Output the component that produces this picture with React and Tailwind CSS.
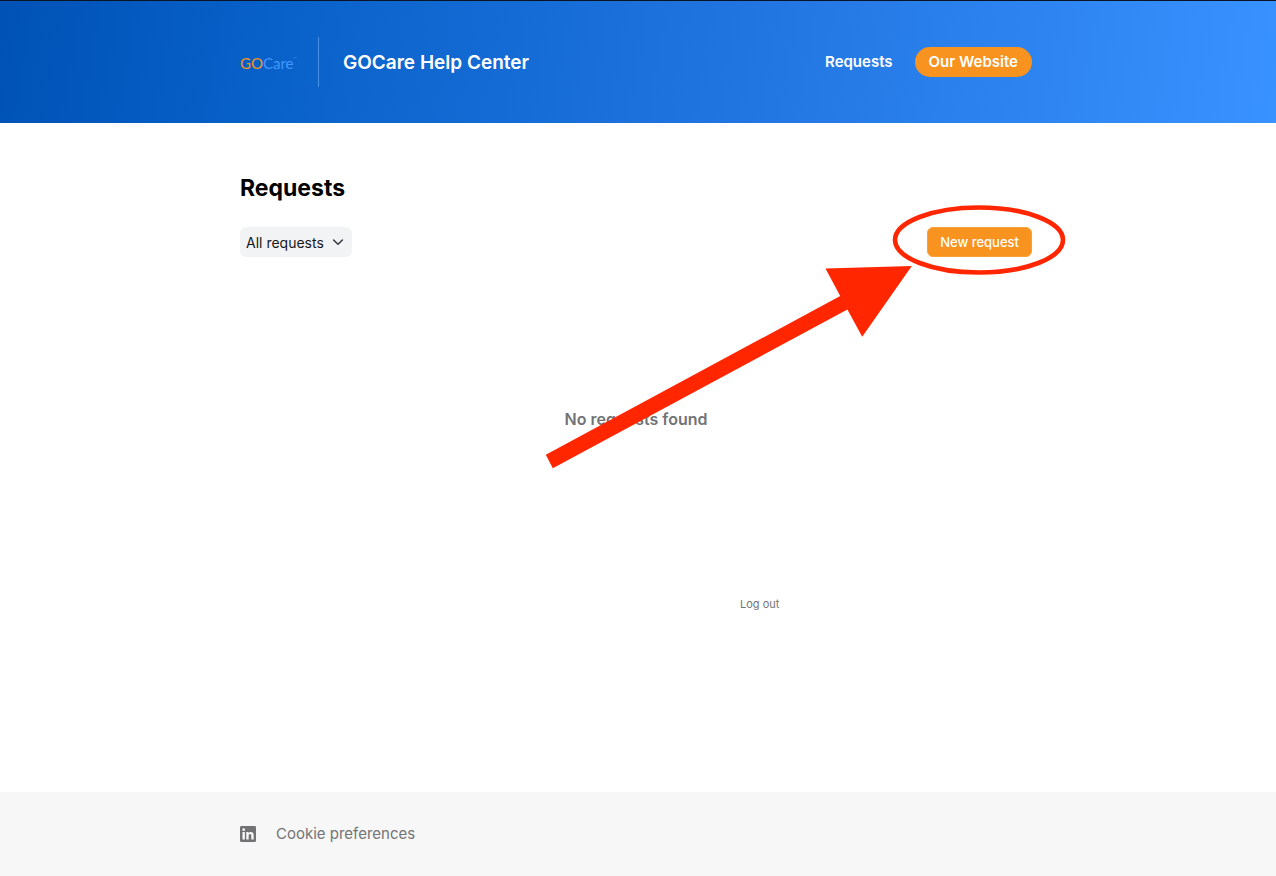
import React from "react";

const container = "mx-auto w-full max-w-[792px]";

function Logo() {
  return (
    <a href="#home" aria-label="GOCare" className="flex h-[50px] w-[79px] items-center border-r border-[#4a8fe6]">
      <span className="flex items-start pt-px font-['Lato','Liberation_Sans',sans-serif] text-[15px] leading-5">
        <span className="text-[#f7931e]">GO</span>
        <span className="text-[#4198ff]">Care</span>
        <span className="text-[4px] leading-3 text-[#4198ff]">™</span>
      </span>
    </a>
  );
}

function Header() {
  return (
    <header className="border-t border-[#0b1420] bg-[linear-gradient(100deg,#0052b5_0%,#0760c8_20%,#2175e0_58%,#3892ff_100%)] px-6 py-9 pr-7">
      <div className={`${container} flex items-center`}>
        <Logo />
        <a href="#help" className="ml-6 pt-px text-[19px] leading-6 font-semibold text-white">
          GOCare Help Center
        </a>
        <nav className="ml-auto flex items-center gap-[22px] text-[15px] leading-5 font-semibold text-white">
          <a href="#requests">Requests</a>
          <a href="#website" className="flex h-[30px] items-center rounded-full bg-[#f7931e] px-[14px]">
            Our Website
          </a>
        </nav>
      </div>
    </header>
  );
}

function Annotation() {
  return (
    <svg
      aria-hidden="true"
      width="840"
      height="360"
      viewBox="240 123 840 360"
      className="pointer-events-none absolute top-0 left-0"
    >
      <ellipse cx="979" cy="240" rx="84" ry="32.5" fill="none" stroke="#ff2600" strokeWidth="4.6" />
      <path d="M545.8 454.8 840.2 296 825.5 268.5 911.8 266 862.2 336.8 847.4 309.4 552.8 468.3Z" fill="#ff2600" />
    </svg>
  );
}

function RequestFilter() {
  return (
    <div className="relative">
      <select
        aria-label="Filter requests"
        className="h-[30px] w-28 appearance-none rounded-md bg-[#f2f3f5] pt-[2px] pl-[6px] text-sm text-[#15171c]"
      >
        <option>All requests</option>
      </select>
      <svg
        aria-hidden="true"
        viewBox="0 0 12 8"
        className="pointer-events-none absolute top-[11px] right-2 h-2 w-3"
        fill="none"
        stroke="#33363d"
        strokeWidth="1.5"
        strokeLinecap="round"
        strokeLinejoin="round"
      >
        <path d="M1.6 2 6 6.3 10.4 2" />
      </svg>
    </div>
  );
}

export default function App() {
  return (
    <div className="flex min-h-screen flex-col overflow-x-hidden bg-white font-['Inter','Liberation_Sans',sans-serif]">
      <Header />
      <main className="flex-1 px-6 pr-7">
        <div className={`${container} relative pt-12`}>
          <h1 className="pt-px text-[23px] leading-8 font-bold text-black">Requests</h1>
          <div className="mt-[23px] flex items-center justify-between">
            <RequestFilter />
            <button
              type="button"
              className="h-[30px] rounded-md border border-[#f9a23c] bg-[#f7931e] px-3 pt-px text-[13px] font-medium text-white"
            >
              New request
            </button>
          </div>
          <p className="mt-[150px] text-center text-base leading-6 font-semibold text-[#737376]">
            No requests found
          </p>
          <div className="mt-[165px] pl-[500px] text-[11px] leading-4 text-[#737376]">
            <a href="#logout">Log out</a>
          </div>
          <Annotation />
        </div>
      </main>
      <footer className="bg-[#f7f7f7] px-6 py-8 pr-7">
        <div className={`${container} flex items-center gap-5`}>
          <a href="#linkedin" aria-label="LinkedIn">
            <svg aria-hidden="true" viewBox="0 0 16 16" className="block size-4">
              <rect width="16" height="16" rx="1.2" fill="#737376" />
              <g fill="#f7f7f7">
                <circle cx="3.7" cy="3.7" r="1.35" />
                <path d="M2.5 6.1h2.35v7.5H2.5zM6.3 6.1h2.25v1.05c.35-.65 1.15-1.25 2.3-1.25 2.4 0 2.8 1.55 2.8 3.6v4.1H11.3V9.95c0-.9-.05-2-1.25-2s-1.4.95-1.4 1.95v3.7H6.3z" />
              </g>
            </svg>
          </a>
          <a href="#cookies" className="text-[15px] leading-5 text-[#737376]">
            Cookie preferences
          </a>
        </div>
      </footer>
    </div>
  );
}
